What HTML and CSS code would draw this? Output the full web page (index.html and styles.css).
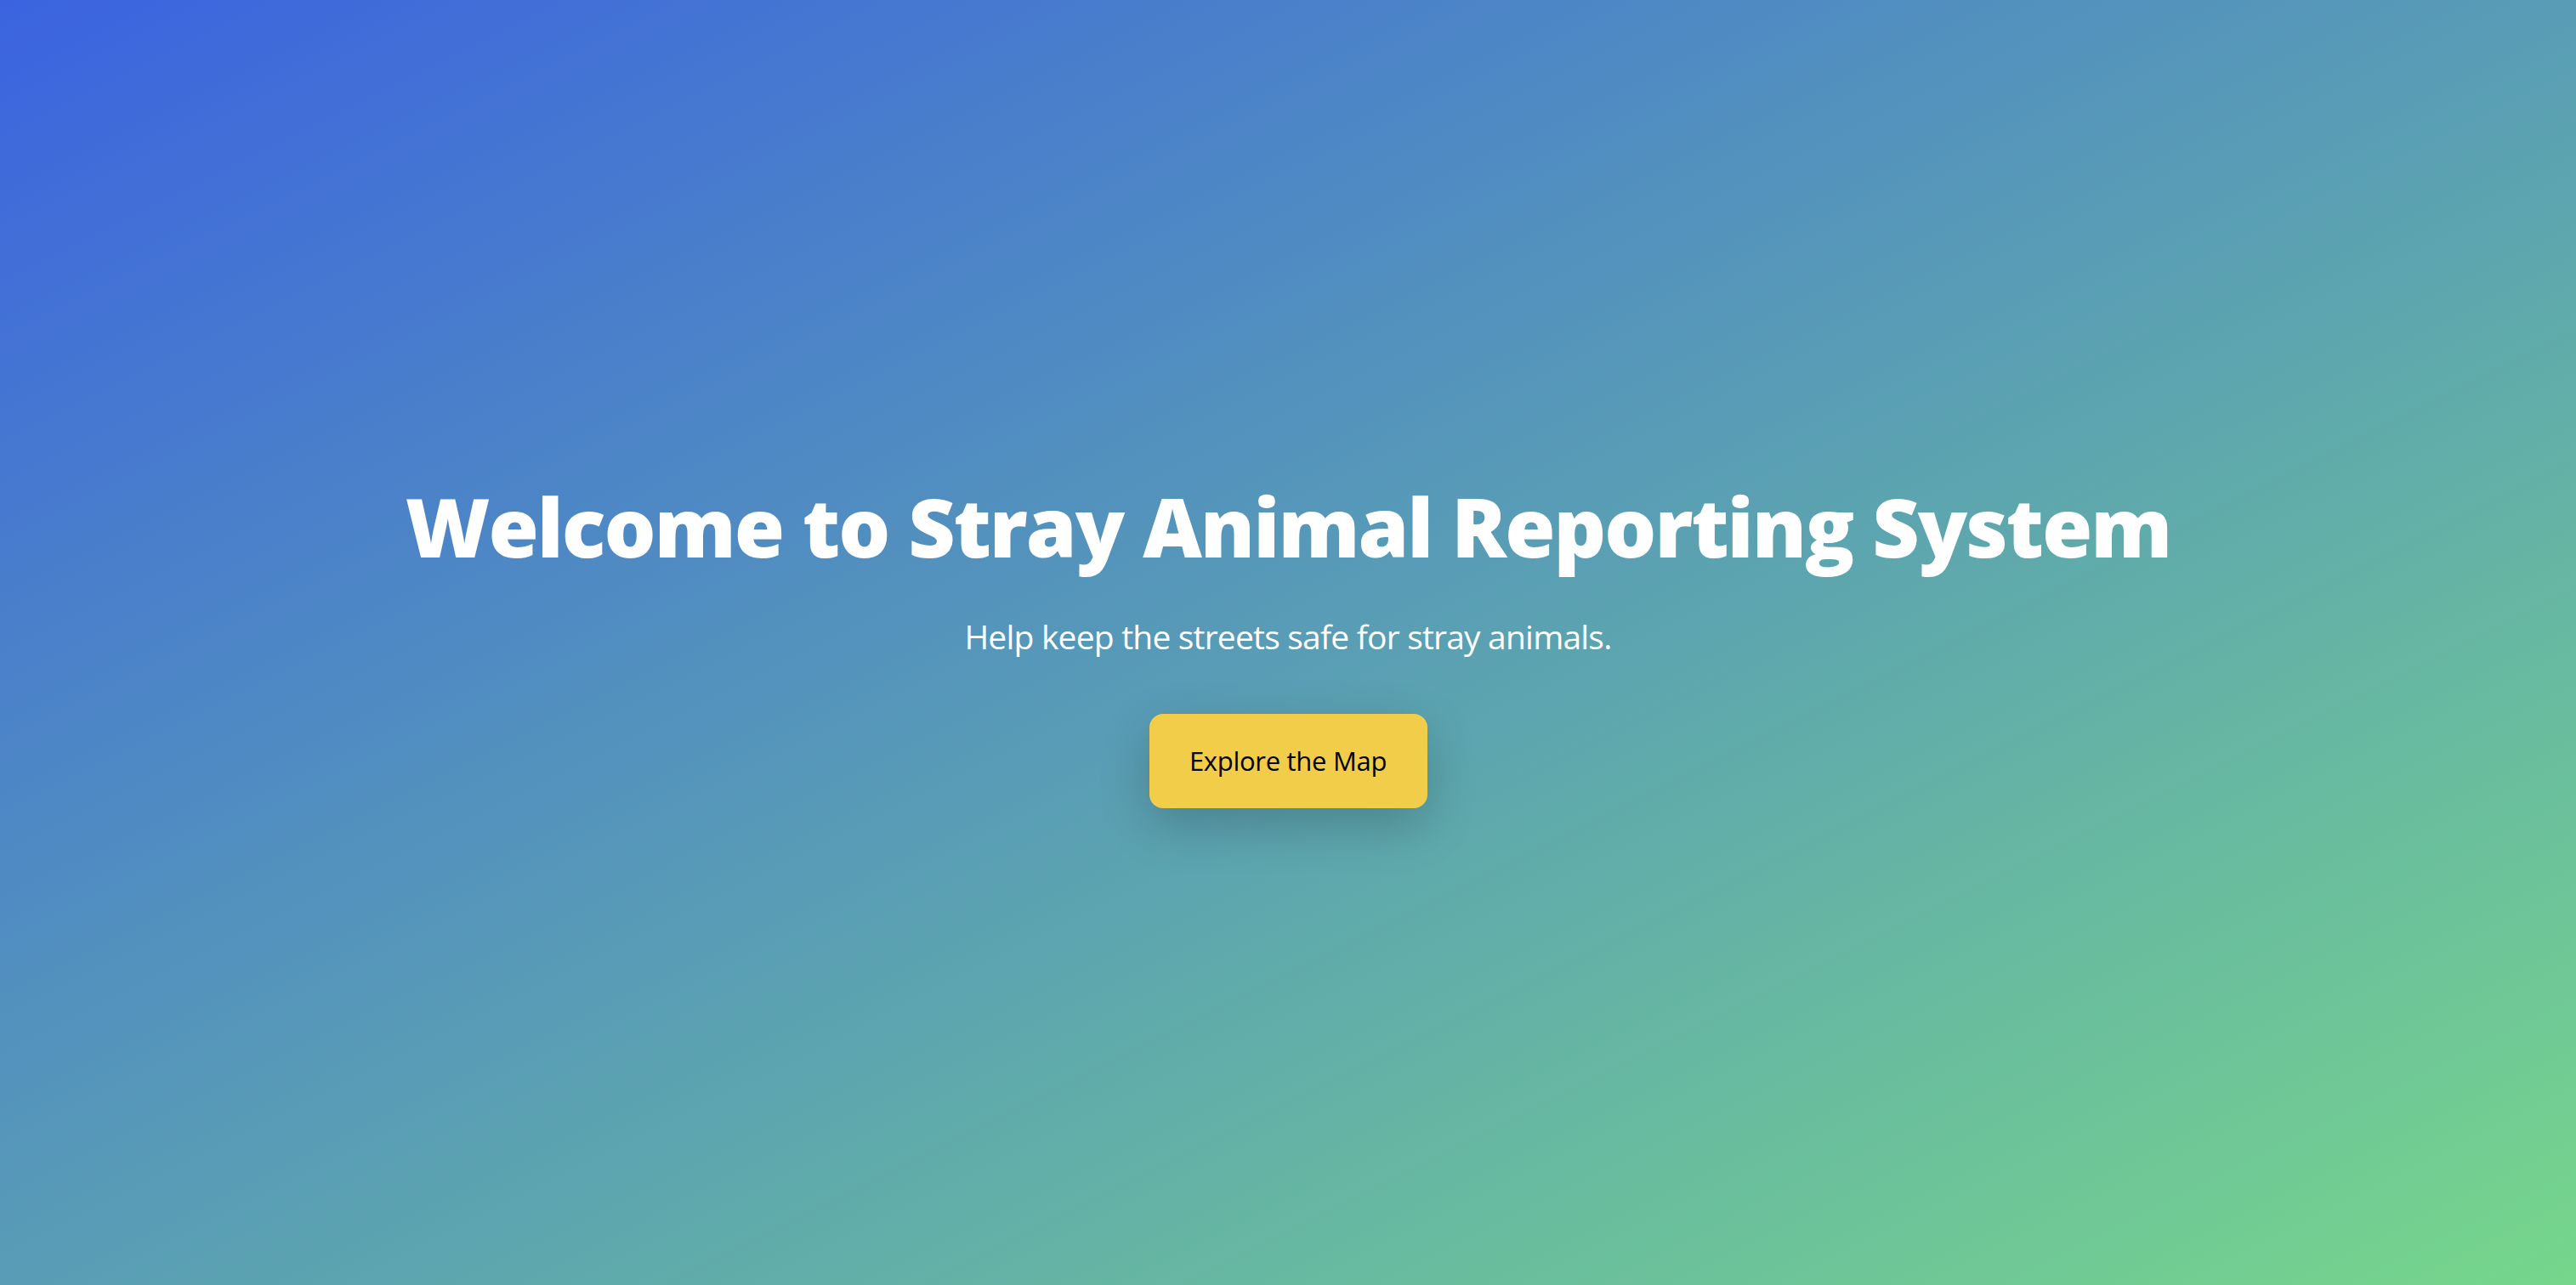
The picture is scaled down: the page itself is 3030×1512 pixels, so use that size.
FILE: index.html
```html
<!DOCTYPE html>
<html lang="en">
<head>
<meta charset="utf-8">
<title>Stray Animal Reporting System</title>
<link rel="stylesheet" href="styles.css">
</head>
<body>
<main class="hero">
  <h1 class="hero-title">Welcome to Stray Animal Reporting System</h1>
  <p class="hero-sub">Help keep the streets safe for stray animals.</p>
  <a class="hero-btn" href="#map">Explore the Map</a>
</main>
</body>
</html>
```
FILE: styles.css
```css
html, body {
  margin: 0;
  padding: 0;
  height: 100%;
}
body {
  font-family: "Open Sans", "Noto Sans", sans-serif;
  background: linear-gradient(to bottom right, #3b63e0, #76d68b);
  color: #fff;
}
.hero {
  min-height: 100vh;
  display: flex;
  flex-direction: column;
  align-items: center;
  justify-content: center;
  text-align: center;
}
.hero-title {
  margin: 0;
  font-size: 96px;
  font-weight: 800;
  line-height: 1.2;
  letter-spacing: -2px;
}
.hero-sub {
  margin: 48px 0 0;
  font-size: 39px;
  font-weight: 400;
  line-height: 1.3;
  letter-spacing: -0.8px;
}
.hero-btn {
  margin-top: 65px;
  display: flex;
  align-items: center;
  justify-content: center;
  width: 327px;
  height: 111px;
  box-sizing: border-box;
  background: #f2cd4a;
  color: #000;
  font-size: 31px;
  letter-spacing: -0.3px;
  text-decoration: none;
  border-radius: 16px;
  box-shadow: 0 20px 60px rgba(0, 0, 0, 0.2);
}
```
